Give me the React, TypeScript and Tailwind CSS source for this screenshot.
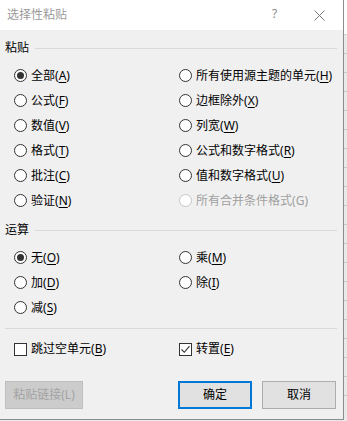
import React from "react";

const font = { fontFamily: '"Noto Sans", "Noto Sans CJK SC", sans-serif' };

function Label({ text, k, disabled }: { text: string; k: string; disabled?: boolean }) {
  return (
    <span className={`text-[12px] leading-none whitespace-nowrap ${disabled ? "text-[#a0a0a0]" : "text-[#000]"}`}>
      {text}(<span className={disabled ? "" : "underline underline-offset-[2px]"}>{k}</span>)
    </span>
  );
}

function Radio({ text, k, checked, disabled }: { text: string; k: string; checked?: boolean; disabled?: boolean }) {
  return (
    <div className="h-[25px] flex items-center gap-[4px]">
      <span
        className={`w-[13px] h-[13px] rounded-full border flex items-center justify-center bg-white shrink-0 ${
          disabled ? "border-[#c6c6c6] bg-[#f4f4f4]" : "border-[#333333]"
        }`}
      >
        {checked && <span className="w-[7px] h-[7px] rounded-full bg-[#333333]" />}
      </span>
      <Label text={text} k={k} disabled={disabled} />
    </div>
  );
}

function Check({ text, k, checked }: { text: string; k: string; checked?: boolean }) {
  return (
    <div className="h-[24px] flex items-center gap-[4px]">
      <span className="w-[13px] h-[13px] border border-[#333333] bg-white flex items-center justify-center shrink-0">
        {checked && (
          <svg width="11" height="11" viewBox="0 0 11 11">
            <path d="M1.5 5.5 L4.3 8.3 L9.5 2.2" fill="none" stroke="#333" strokeWidth="1.1" />
          </svg>
        )}
      </span>
      <Label text={text} k={k} />
    </div>
  );
}

function Group({ title }: { title: string }) {
  return (
    <div className="h-[16px] flex items-center pl-[5px] pr-[6px]">
      <span className="text-[12px] leading-none text-black">{title}</span>
      <span className="flex-1 h-px bg-[#dadada] ml-[6px]" />
    </div>
  );
}

export default function App() {
  return (
    <div className="w-[347px] h-[421px] flex bg-[#e9e9e9] overflow-hidden" style={font}>
      <div className="w-[344px] h-[420px] bg-[#f0f0f0] border-r border-b border-[#8c8c8c] flex flex-col shrink-0">
        <div className="h-[30px] bg-white flex items-center relative shrink-0">
          <span className="pl-[7px] text-[12px] text-[#9a9a9a] leading-none">选择性粘贴</span>
          <span className="absolute left-[272px] top-[8px] text-[12px] text-[#8a8a8a] leading-none">?</span>
          <svg className="absolute left-[314px] top-[10px]" width="11" height="11" viewBox="0 0 11 11">
            <path d="M0.5 0.5 L10.5 10.5 M10.5 0.5 L0.5 10.5" stroke="#7a7a7a" strokeWidth="1" />
          </svg>
        </div>
        <div className="mt-[10px]">
          <Group title="粘贴" />
        </div>
        <div className="mt-[7px] grid grid-cols-[165px_1fr] pl-[14px]">
          <Radio text="全部" k="A" checked />
          <Radio text="所有使用源主题的单元" k="H" />
          <Radio text="公式" k="F" />
          <Radio text="边框除外" k="X" />
          <Radio text="数值" k="V" />
          <Radio text="列宽" k="W" />
          <Radio text="格式" k="T" />
          <Radio text="公式和数字格式" k="R" />
          <Radio text="批注" k="C" />
          <Radio text="值和数字格式" k="U" />
          <Radio text="验证" k="N" />
          <Radio text="所有合并条件格式" k="G" disabled />
        </div>
        <div className="mt-[9px]">
          <Group title="运算" />
        </div>
        <div className="mt-[7px] grid grid-cols-[165px_1fr] pl-[14px]">
          <Radio text="无" k="O" checked />
          <Radio text="乘" k="M" />
          <Radio text="加" k="D" />
          <Radio text="除" k="I" />
          <Radio text="减" k="S" />
        </div>
        <div className="mt-[8px] mx-[5px] mr-[6px] h-px bg-[#dadada]" />
        <div className="mt-[8px] grid grid-cols-[165px_1fr] pl-[14px]">
          <Check text="跳过空单元" k="B" />
          <Check text="转置" k="E" checked />
        </div>
        <div className="mt-[20px] flex items-center pl-[5px]">
          <div className="w-[78px] h-[28px] bg-[#cccccc] border border-[#bfbfbf] flex items-center justify-center text-[12px] text-[#a3a3a3] leading-none">
            粘贴链接(L)
          </div>
          <div className="ml-[95px] w-[74px] h-[28px] bg-[#e1e1e1] border-2 border-[#0078d7] flex items-center justify-center text-[12px] text-black leading-none">
            确定
          </div>
          <div className="ml-[10px] w-[74px] h-[28px] bg-[#e1e1e1] border border-[#adadad] flex items-center justify-center text-[12px] text-black leading-none">
            取消
          </div>
        </div>
      </div>
      <div className="flex-1 flex flex-col">
        <div className="h-[35px] bg-white border-b border-[#d4d4d4]" />
        <div className="h-[19px] border-b border-[#c8c8c8]" />
        <div className="h-[19px] border-b border-[#c8c8c8]" />
        <div className="h-[19px] border-b border-[#c8c8c8]" />
        <div className="h-[19px] border-b border-[#c8c8c8]" />
        <div className="h-[19px] border-b border-[#c8c8c8]" />
        <div className="h-[19px] border-b border-[#c8c8c8]" />
        <div className="h-[19px] border-b border-[#c8c8c8]" />
        <div className="h-[19px] border-b border-[#c8c8c8]" />
        <div className="h-[19px] border-b border-[#c8c8c8]" />
        <div className="h-[19px] border-b border-[#c8c8c8]" />
        <div className="h-[19px] border-b border-[#c8c8c8]" />
        <div className="h-[19px] border-b border-[#c8c8c8]" />
        <div className="h-[19px] border-b border-[#c8c8c8]" />
        <div className="h-[19px] border-b border-[#c8c8c8]" />
        <div className="h-[19px] border-b border-[#c8c8c8]" />
        <div className="h-[19px] border-b border-[#c8c8c8]" />
        <div className="h-[19px] border-b border-[#c8c8c8]" />
        <div className="h-[19px] border-b border-[#c8c8c8]" />
        <div className="h-[19px] border-b border-[#c8c8c8]" />
      </div>
    </div>
  );
}
